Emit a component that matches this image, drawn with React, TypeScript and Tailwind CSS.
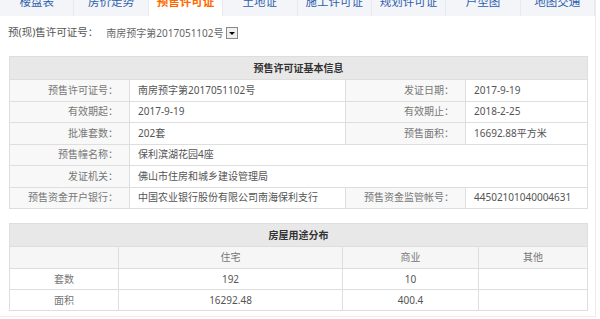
import React from "react";

const tabs = ["楼盘表", "房价走势", "预售许可证", "土地证", "施工许可证", "规划许可证", "户型图", "地图交通"];

const font = { fontFamily: '"Noto Sans", "Noto Sans CJK SC", sans-serif' };

function Label({ children }: { children: React.ReactNode }) {
  return (
    <td className="bg-[#f8f8f8] border border-[#dedede] text-right pr-[11px] text-[#777] whitespace-nowrap">
      {children}
    </td>
  );
}
function Val({ children, colSpan }: { children?: React.ReactNode; colSpan?: number }) {
  return (
    <td colSpan={colSpan} className="bg-white border border-[#dedede] text-left pl-[8px] text-[#555] whitespace-nowrap">
      {children}
    </td>
  );
}

export default function App() {
  return (
    <div className="w-[600px] h-[319px] overflow-hidden bg-white" style={font}>
      <div className="w-[596px] h-[317px] border-r border-b border-[#ececec]">
        <div className="flex h-[16px] bg-[#f3f5f8]">
          {tabs.map((t, i) => (
            <div
              key={t}
              className={
                "w-[74.5px] h-[16px] overflow-hidden flex justify-center border-r border-[#e6e9ee] " +
                (i === 2 ? "bg-white" : "")
              }
            >
              <span
                className={
                  "text-[11.5px] leading-[16px] -mt-[6px] " +
                  (i === 2 ? "text-[#ff6a00] font-bold" : "text-[#2f5fae]")
                }
              >
                {t}
              </span>
            </div>
          ))}
        </div>

        <div className="flex items-center h-[18px] mt-[8px] pl-[8px]">
          <span className="text-[10.5px] text-[#555]">预(现)售许可证号：</span>
          <div className="ml-[6px] flex items-center h-[14px]">
            <span className="text-[10px] text-[#666] pl-[2px] pr-[2px]">南房预字第2017051102号</span>
            <div className="w-[12px] h-[12px] border border-[#8a8a8a] bg-[#f0f0f0] flex items-center justify-center">
              <div className="w-0 h-0 border-l-[3px] border-r-[3px] border-t-[3px] border-l-transparent border-r-transparent border-t-black" />
            </div>
          </div>
        </div>

        <table className="ml-[9px] mt-[14px] w-[578px] table-fixed border-collapse text-[10px]">
          <colgroup>
            <col className="w-[120px]" />
            <col className="w-[216px]" />
            <col className="w-[120px]" />
            <col className="w-[122px]" />
          </colgroup>
          <tbody>
            <tr className="h-[23px]">
              <td colSpan={4} className="bg-[#e8e8e8] border border-[#dedede] text-center font-bold text-[#333]">
                预售许可证基本信息
              </td>
            </tr>
            <tr className="h-[21.5px]">
              <Label>预售许可证号：</Label>
              <Val>南房预字第2017051102号</Val>
              <Label>发证日期：</Label>
              <Val>2017-9-19</Val>
            </tr>
            <tr className="h-[21.5px]">
              <Label>有效期起：</Label>
              <Val>2017-9-19</Val>
              <Label>有效期止：</Label>
              <Val>2018-2-25</Val>
            </tr>
            <tr className="h-[21.5px]">
              <Label>批准套数：</Label>
              <Val>202套</Val>
              <Label>预售面积：</Label>
              <Val>16692.88平方米</Val>
            </tr>
            <tr className="h-[21.5px]">
              <Label>预售幢名称：</Label>
              <Val colSpan={3}>保利滨湖花园4座</Val>
            </tr>
            <tr className="h-[21.5px]">
              <Label>发证机关：</Label>
              <Val colSpan={3}>佛山市住房和城乡建设管理局</Val>
            </tr>
            <tr className="h-[21.5px]">
              <Label>预售资金开户银行：</Label>
              <Val>中国农业银行股份有限公司南海保利支行</Val>
              <Label>预售资金监管帐号：</Label>
              <Val>44502101040004631</Val>
            </tr>
          </tbody>
        </table>

        <table className="ml-[9px] mt-[14px] w-[578px] table-fixed border-collapse text-[10px] text-center text-[#555]">
          <colgroup>
            <col className="w-[109px]" />
            <col className="w-[224px]" />
            <col className="w-[136px]" />
            <col className="w-[109px]" />
          </colgroup>
          <tbody>
            <tr className="h-[23px]">
              <td colSpan={4} className="bg-[#e8e8e8] border border-[#dedede] font-bold text-[#333]">
                房屋用途分布
              </td>
            </tr>
            <tr className="h-[22px] bg-[#f6f6f6] text-[#777]">
              <td className="border border-[#dedede]"></td>
              <td className="border border-[#dedede]">住宅</td>
              <td className="border border-[#dedede]">商业</td>
              <td className="border border-[#dedede]">其他</td>
            </tr>
            <tr className="h-[21px]">
              <td className="border border-[#dedede] text-[#777]">套数</td>
              <td className="border border-[#dedede]">192</td>
              <td className="border border-[#dedede]">10</td>
              <td className="border border-[#dedede]"></td>
            </tr>
            <tr className="h-[21px]">
              <td className="border border-[#dedede] text-[#777]">面积</td>
              <td className="border border-[#dedede]">16292.48</td>
              <td className="border border-[#dedede]">400.4</td>
              <td className="border border-[#dedede]"></td>
            </tr>
          </tbody>
        </table>
      </div>
    </div>
  );
}
